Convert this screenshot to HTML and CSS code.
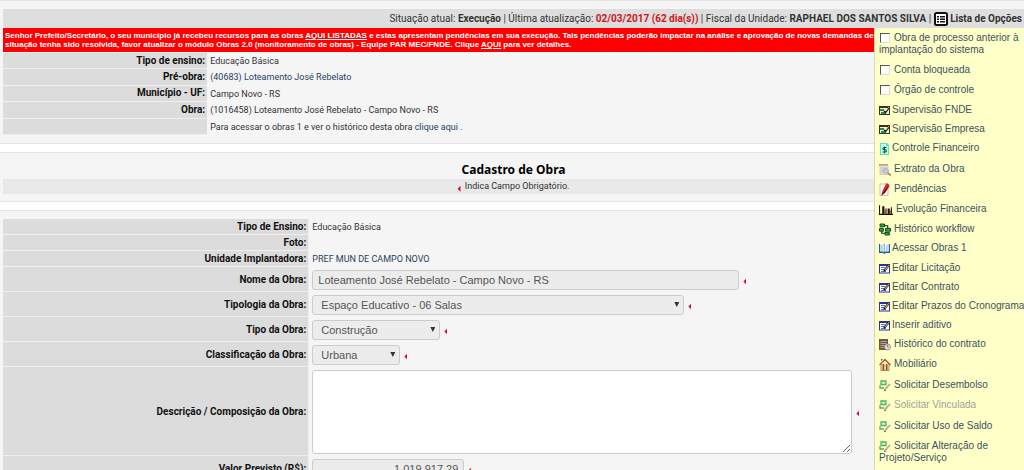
FILE: index.html
```html
<!DOCTYPE html>
<html lang="pt-BR">
<head>
<meta charset="utf-8">
<title>Cadastro de Obra</title>
<link rel="stylesheet" href="styles.css">
</head>
<body>
<svg class="sprite" aria-hidden="true">
  <symbol id="i-board" viewBox="0 0 11 11"><path fill="#3d3218" d="M0 1h11v9H0z"/><path fill="#e9f3df" d="M1 3h9v6H1z"/><path fill="#2f8a52" d="M1 4h4v2H1zM2 7h5v2H2z"/><path fill="none" stroke="#111" stroke-width="1.3" d="M5 6l1.500 1.500L10 3"/><path stroke="#e3a13c" d="M7 6l3-4"/></symbol>
  <symbol id="i-money" viewBox="0 0 11 13"><path fill="#63e0bd" d="M1 1h7l2 2v10H1z"/><path fill="#c9fff0" d="M2 2h5v2h2v8H2z"/><path fill="none" stroke="#08623c" stroke-width="1.100" d="M7.500 5.500H5Q3.500 6 4 7.200l3 .8q1 1.500-.5 2H3.500M5.500 4.500V11.500"/></symbol>
  <symbol id="i-extract" viewBox="0 0 12 13"><path fill="#d99a6c" d="M0 1h9v2H0z"/><path fill="#e7e3e0" stroke="#b9b0ac" stroke-width=".6" d="M1 2.500h8v9H1z"/><path stroke="#b3aaa8" stroke-width=".8" d="M2 5h6M2 7h5M2 9h4"/><circle cx="7" cy="8" r="2.300" fill="#bcd6ee" stroke="#8fa3bb" stroke-width=".8"/><path stroke="#cf7d4b" stroke-width="1.700" d="M9 10l3 2.500"/></symbol>
  <symbol id="i-pen" viewBox="0 0 11 13"><path fill="#f8f8f8" stroke="#aaa" stroke-width=".7" d="M.5 1h8v11.500h-8z"/><path fill="#d81d1d" d="M7 0l3 2-5 8-3 2 1-4z"/><path stroke="#760b0b" stroke-width=".8" d="M9.500 3L5 10l-3 2"/></symbol>
  <symbol id="i-chart" viewBox="0 0 13 10"><path fill="#17140e" d="M0 1h1v8h12v1H0zM3 2h2v7H3zM6 4h1v5H6zM8 4h2v5H8zM11 3h1v6h-1z"/><path fill="#a83622" d="M5 5h1v4H5zM10 6h1v3h-1z"/></symbol>
  <symbol id="i-flow" viewBox="0 0 11 11"><path fill="none" stroke="#222" d="M5 2h3v4M2.500 5v4H6"/><g fill="#25c047" stroke="#063e12" stroke-width=".9"><path d="M1 .5h4v2.500H1zM6 4.500h4.500v2.500H6zM.5 4.500h3.500v2.500H.5zM5.500 8.300h4v2.200h-4z"/></g></symbol>
  <symbol id="i-book" viewBox="0 0 11 11"><path fill="#245ea4" d="M0 1h11v9H7l-1.500 1L4 10H0z"/><path fill="#eef8ff" d="M1.200 1q3-.5 4 .8 1-1.300 4.600-.8v7.500H6.500l-1 .8-1-.8H1.200z"/><path stroke="#6aa6d7" stroke-width=".8" d="M5.500 2v7M2 3h2.500M2 5h2.500M2 7h2.500M7 3h2M7 5h2M7 7h2"/></symbol>
  <symbol id="i-edit" viewBox="0 0 11 11"><path fill="#25359b" d="M0 1h11v9.500H0z"/><path fill="#fff" d="M1 3h9v6.500H1z"/><path stroke="#526be0" d="M2 4.500h4M2 6.500h3M2 8.500h5"/><path stroke="#141414" stroke-width="2" d="M5 8l5-6"/><path stroke="#e8a33b" stroke-width="1.200" d="M6 7l4-5"/></symbol>
  <symbol id="i-contract" viewBox="0 0 12 13"><path fill="#6d5a4a" d="M0 1h9v11H0z"/><path stroke="#c6b7a4" stroke-width=".8" d="M1.500 3.500h6M1.500 5.500h6M1.500 7.500h5M1.500 9.500h4"/><circle cx="8.500" cy="9" r="3" fill="#e8e5e0" stroke="#827a73" stroke-width=".8"/><path fill="none" stroke="#555" stroke-width=".7" d="M8.500 7v2h1.500"/></symbol>
  <symbol id="i-house" viewBox="0 0 12 13"><path fill="#fff0c7" stroke="#9d6525" stroke-width=".8" d="M2 6v6.500h8V6L6 2z"/><path fill="none" stroke="#b55b23" stroke-width="1.500" d="M.5 7L6 1.500 11.500 7"/><path fill="#815026" d="M3.500 6h1.800v6H3.500zM6.800 6h1.700v6H6.800zM2 3V1h1.500v1z"/></symbol>
  <symbol id="i-request" viewBox="0 0 12 12"><path fill="#d8f2d5" stroke="#51b35e" stroke-width="1.300" d="M2 1.500h5v3.500H2z"/><path fill="none" stroke="#51b35e" stroke-width="1.300" d="M1 5.500v3h4"/><path stroke="#a8a49d" stroke-width="1.800" d="M5.500 10.500l5.500-6"/><path stroke="#eab795" d="M7 10l4-5"/><path stroke="#cc5d50" d="M5 11h2"/></symbol>
</svg>

<main class="page">
  <section class="panel">
    <header class="status">
      <span>Situação atual: <b>Execução</b> | Última atualização: <b class="late">02/03/2017 (62 dia(s))</b> | Fiscal da Unidade: <b>RAPHAEL DOS SANTOS SILVA</b> |</span>
      <button type="button" class="options-toggle">
        <svg width="14" height="14" viewBox="0 0 14 14"><rect x="1" y="1" width="12" height="12" rx="1.500" fill="#fff" stroke="#111" stroke-width="2"/><path fill="#111" d="M3 4h2v1.500H3zM6 4h5v1.500H6zM3 6.500h2V8H3zM6 6.500h5V8H6zM3 9h2v1.500H3zM6 9h5v1.500H6z"/></svg>
        Lista de Opções
      </button>
      <nav class="options">
        <ul>
          <li class="two"><label><input type="checkbox">Obra de processo anterior à implantação do sistema</label></li>
          <li><label><input type="checkbox">Conta bloqueada</label></li>
          <li><label><input type="checkbox">Órgão de controle</label></li>
          <li class="tight"><a href="#"><svg class="small"><use href="#i-board"/></svg>Supervisão FNDE</a></li>
          <li class="tight"><a href="#"><svg class="small"><use href="#i-board"/></svg>Supervisão Empresa</a></li>
          <li class="loose"><a href="#"><svg class="small"><use href="#i-money"/></svg>Controle Financeiro</a></li>
          <li><a href="#"><svg><use href="#i-extract"/></svg>Extrato da Obra</a></li>
          <li><a href="#"><svg><use href="#i-pen"/></svg>Pendências</a></li>
          <li><a href="#"><svg class="wide"><use href="#i-chart"/></svg>Evolução Financeira</a></li>
          <li class="tight"><a href="#"><svg><use href="#i-flow"/></svg>Histórico workflow</a></li>
          <li><a href="#"><svg class="small"><use href="#i-book"/></svg>Acessar Obras 1</a></li>
          <li class="tight"><a href="#"><svg class="small"><use href="#i-edit"/></svg>Editar Licitação</a></li>
          <li class="tight"><a href="#"><svg class="small"><use href="#i-edit"/></svg>Editar Contrato</a></li>
          <li class="tight"><a href="#"><svg class="small"><use href="#i-edit"/></svg>Editar Prazos do Cronograma</a></li>
          <li class="tight"><a href="#"><svg class="small"><use href="#i-edit"/></svg>Inserir aditivo</a></li>
          <li><a href="#"><svg><use href="#i-contract"/></svg>Histórico do contrato</a></li>
          <li class="loose"><a href="#"><svg><use href="#i-house"/></svg>Mobiliário</a></li>
          <li><a href="#"><svg><use href="#i-request"/></svg>Solicitar Desembolso</a></li>
          <li class="loose"><a class="off"><svg><use href="#i-request"/></svg>Solicitar Vinculada</a></li>
          <li><a href="#"><svg><use href="#i-request"/></svg>Solicitar Uso de Saldo</a></li>
          <li class="two"><a href="#"><svg><use href="#i-request"/></svg>Solicitar Alteração de Projeto/Serviço</a></li>
        </ul>
      </nav>
    </header>
    <p class="alert">Senhor Prefeito/Secretário, o seu município já recebeu recursos para as obras <a href="#">AQUI LISTADAS</a> e estas apresentam pendências em sua execução. Tais pendências poderão impactar na análise e aprovação de novas demandas de obras. Caso a<br>situação tenha sido resolvida, favor atualizar o módulo Obras 2.0 (monitoramento de obras) - Equipe PAR MEC/FNDE. Clique <a href="#">AQUI</a> para ver detalhes.</p>
    <dl class="summary">
      <dt>Tipo de ensino:</dt><dd>Educação Básica</dd>
      <dt>Pré-obra:</dt><dd><a href="#">(40683) Loteamento José Rebelato</a></dd>
      <dt>Município - UF:</dt><dd>Campo Novo - RS</dd>
      <dt>Obra:</dt><dd>(1016458) Loteamento José Rebelato - Campo Novo - RS</dd>
      <dt></dt><dd>Para acessar o obras 1 e ver o histórico desta obra <a href="#">clique aqui</a> .</dd>
    </dl>
  </section>

  <section class="panel heading">
    <h1>Cadastro de Obra</h1>
    <p class="hint"><i class="req"></i> Indica Campo Obrigatório.</p>
  </section>

  <form class="panel form">
    <div class="row"><span class="label">Tipo de Ensino:</span><div class="value">Educação Básica</div></div>
    <div class="row"><span class="label">Foto:</span><div class="value"></div></div>
    <div class="row"><span class="label">Unidade Implantadora:</span><div class="value"><a href="#">PREF MUN DE CAMPO NOVO</a></div></div>
    <div class="row field"><label class="label" for="nome">Nome da Obra:</label><div class="value"><input id="nome" class="control w-name" value="Loteamento José Rebelato - Campo Novo - RS" readonly><i class="req"></i></div></div>
    <div class="row field"><label class="label" for="tipologia">Tipologia da Obra:</label><div class="value"><span class="select w-typology"><select id="tipologia" class="control"><option>Espaço Educativo - 06 Salas</option></select></span><i class="req"></i></div></div>
    <div class="row field"><label class="label" for="tipo">Tipo da Obra:</label><div class="value"><span class="select w-type"><select id="tipo" class="control"><option>Construção</option></select></span><i class="req"></i></div></div>
    <div class="row field"><label class="label" for="classe">Classificação da Obra:</label><div class="value"><span class="select w-class"><select id="classe" class="control"><option>Urbana</option></select></span><i class="req"></i></div></div>
    <div class="row field"><label class="label" for="descricao">Descrição / Composição da Obra:</label><div class="value"><textarea id="descricao" class="control w-text"></textarea><i class="req"></i></div></div>
    <div class="row field"><label class="label" for="valor">Valor Previsto (R$):</label><div class="value"><input id="valor" class="control w-value" value="1.019.917,29" readonly><i class="req"></i></div></div>
  </form>
</main>
</body>
</html>
```

FILE: styles.css
```css
* { box-sizing: border-box; }
body {
  margin: 0;
  background: #fff;
  color: #333;
  font: 9px/12px Roboto, Arial, sans-serif;
}
.sprite { position: absolute; width: 0; height: 0; }
.page { height: 100vh; overflow: hidden; }
a { color: #28415e; text-decoration: none; }
.panel {
  background: #f5f5f5;
  border-top: 1px solid #e4e4e4;
  border-bottom: 1px solid #e4e4e4;
  padding: 8px 0 8px 3px;
  margin-bottom: 8px;
}

.status {
  position: relative;
  display: flex;
  justify-content: flex-end;
  align-items: center;
  gap: 3px;
  height: 19px;
  padding-right: 2px;
  background: #dedede;
  font-size: 10px;
  white-space: nowrap;
}
.status .late { color: #c9161d; }
.options-toggle {
  display: flex;
  align-items: center;
  gap: 2px;
  padding: 0;
  border: 0;
  background: none;
  color: #333;
  font: bold 10px/12px Roboto, Arial, sans-serif;
}

.options {
  position: absolute;
  top: 19px;
  right: 0;
  width: 150px;
  height: 100vh;
  padding: 4px 0 0 4px;
  background: #ffffc8;
  border-left: 1px solid #d8d8b4;
  font-family: "Liberation Sans", Arial, sans-serif;
}
.options ul { margin: 0; padding: 0; list-style: none; }
.options li { min-height: 20px; line-height: 12px; }
.options .tight { min-height: 19px; }
.options .loose { min-height: 21px; }
.options .two { min-height: 32px; white-space: normal; }
.options a, .options label { color: #3c5260; }
.options .off { color: #a3a396; }
.options svg {
  width: 12px;
  height: 13px;
  margin: -1px 3px -1px 0;
  vertical-align: middle;
}
.options .small { width: 11px; margin-right: 2px; }
.options .wide { width: 14px; }
.options input {
  appearance: none;
  width: 10px;
  height: 10px;
  margin: 0 4px 0 1px;
  border: 1px solid #ddd;
  border-top-color: #555;
  border-left-color: #555;
  background: #fff;
  vertical-align: middle;
}

.alert {
  margin: 0;
  padding: 3px 2px;
  overflow: hidden;
  background: #f00;
  color: #fff;
  font: bold 8px/9px "Liberation Sans", Arial, sans-serif;
  white-space: nowrap;
}
.alert a { color: #fff; text-decoration: underline; }

.summary {
  display: grid;
  grid-template-columns: 20% 1fr;
  min-height: 83px;
  margin: 0;
  padding-top: 1px;
}
.summary dt, .label {
  display: flex;
  align-items: center;
  justify-content: flex-end;
  padding-right: 2px;
  background: #dcdcdc;
  border-bottom: 1px solid #eee;
  color: #111;
  font-size: 10px;
  font-weight: bold;
}
.summary dd { margin: 0; padding: 2px 3px; }

.heading { padding-bottom: 7px; }
.heading h1 {
  margin: 0;
  color: #000;
  font: bold 12px/18px "Noto Sans", sans-serif;
  text-align: center;
}
.hint {
  margin: 0;
  background: #e8e8e8;
  line-height: 15px;
  text-align: center;
}
.req {
  display: inline-block;
  width: 3px;
  height: 6px;
  background: #d4112b;
  clip-path: polygon(0 50%, 100% 0, 100% 100%);
  vertical-align: middle;
}
.hint .req { margin: 4px 2px 0 0; }

.row {
  display: grid;
  grid-template-columns: 30% 1fr;
  min-height: 16px;
}
.label { border-right: 1px solid #eee; }
.value { display: flex; align-items: center; gap: 4px; padding-left: 3px; }
.field .value { padding: 3px 3px 2px; }
.field .label { padding-top: 2px; }
.field .req { margin-top: 3px; }
.control {
  height: 20px;
  margin: 0;
  padding: 0 5px;
  border: 1px solid #ccc;
  border-radius: 3px;
  background: #ececec;
  color: #555;
  font: 11px/16px "Liberation Sans", Arial, sans-serif;
}
.select { position: relative; display: flex; }
.select .control { appearance: none; width: 100%; padding: 0 8px; }
.select::after {
  content: "";
  position: absolute;
  top: 7px;
  right: 5px;
  width: 5px;
  height: 5px;
  background: #333;
  clip-path: polygon(0 0, 100% 0, 50% 100%);
}
.form { padding-top: 8px; }
.w-name { width: 427px; }
.w-typology { width: 372px; }
.w-type { width: 128px; }
.w-class { width: 88px; }
.w-text { width: 540px; height: 84px; background: #fff; }
.w-value { width: 152px; text-align: right; }
```
